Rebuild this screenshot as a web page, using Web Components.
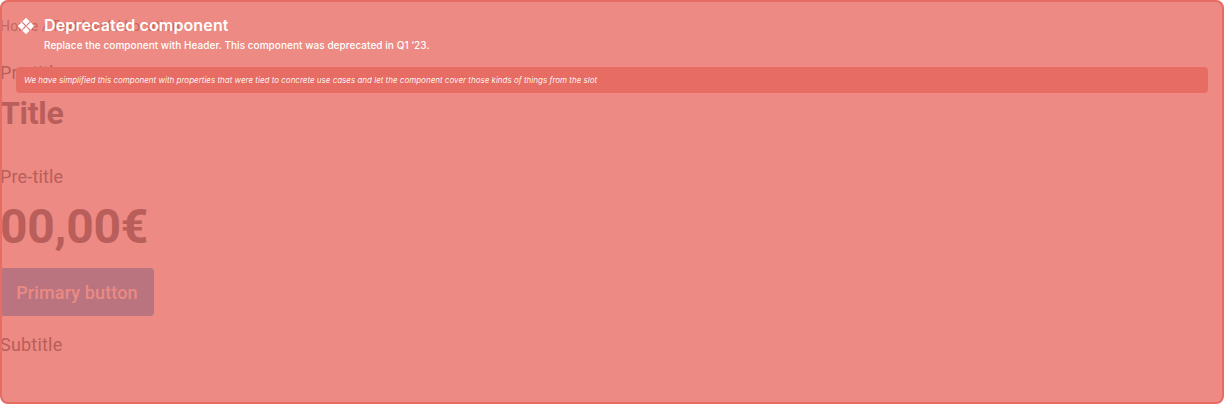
<!DOCTYPE html>
<html lang="en"><head><meta charset="utf-8"><title>Header</title>
<style>body{margin:0;background:#fff}</style></head><body>
<deprecated-frame>
<page-header></page-header>
<deprecation-notice slot="notice">
<span slot="title">Deprecated component</span>
<span slot="text">Replace the component with Header. This component was deprecated in Q1 ‘23.</span>
<span slot="note">We have simplified this component with properties that were tied to concrete use cases and let the component cover those kinds of things from the slot</span>
</deprecation-notice>
</deprecated-frame>
<script>
const define=(name,html)=>customElements.define(name,class extends HTMLElement{
 constructor(){super();this.attachShadow({mode:'open'}).innerHTML=html}
});
define('primary-button',`<style>
:host{display:flex;box-sizing:border-box;width:154px;height:48px;padding-top:2px;border-radius:4px;background:#b97480;color:#eb8a83;align-items:center;justify-content:center;font:500 18px/24px Roboto,sans-serif;letter-spacing:.12px}
</style><slot></slot>`);
define('page-header',`<style>
:host{display:block;color:#b95e5a;font:400 18px/24px Roboto,sans-serif;white-space:nowrap;letter-spacing:.15px}
.crumbs{font-size:14px;line-height:20px;padding-top:16px;color:#c66661}
.pre{margin-top:25px}
h1{margin:8px 0 0;font-size:32px;line-height:40px;font-weight:700;letter-spacing:-.3px}
.pre2{margin-top:32px}
.price{font-size:48px;line-height:56px;font-weight:700;margin-top:10px;letter-spacing:-.25px}
primary-button{margin-top:13px}
.sub{margin-top:17px;letter-spacing:.2px}
</style>
<div class="crumbs">Home / Text level / Location</div>
<div class="pre">Pre-title</div><h1>Title</h1>
<div class="pre2">Pre-title</div><div class="price">00,00€</div>
<primary-button>Primary button</primary-button><div class="sub">Subtitle</div>`);
define('deprecation-notice',`<style>
:host{display:block;color:#fff;font-family:Inter,sans-serif;white-space:nowrap}
.row{display:flex;gap:8px}
svg{width:20px;height:20px;display:block}
.title{font-size:16px;line-height:20px;font-weight:600;letter-spacing:.13px;margin-top:-1px}
.text{font-size:10px;line-height:16px;font-weight:500;margin-top:2px;letter-spacing:.05px}
.note{margin-top:14px;height:26px;box-sizing:border-box;padding:0 8px;border-radius:4px;background:#e76c63;color:#fffffff0;font-size:8px;line-height:26px;font-style:italic}
</style>
<div class="row"><svg viewBox="0 0 20 20" fill="#fff"><path d="M10 1.800l3.700 3.700L10 9.200 6.300 5.500zM5.500 6.300L9.200 10l-3.700 3.700L1.800 10zM14.500 6.300L18.200 10l-3.700 3.700L10.800 10zM10 10.800l3.700 3.700L10 18.200 6.300 14.500z"/></svg>
<div><div class="title"><slot name="title"></slot></div><div class="text"><slot name="text"></slot></div></div></div>
<div class="note"><slot name="note"></slot></div>`);
define('deprecated-frame',`<style>
:host{display:block;position:relative;box-sizing:border-box;width:1224px;height:404px;border-radius:8px;background:#ec8a83;overflow:hidden}
.cover{position:absolute;inset:0;box-sizing:border-box;border:2px solid #e76c63;border-radius:8px;padding:14px}
</style><slot></slot><div class="cover"><slot name="notice"></slot></div>`);
</script></body></html>
